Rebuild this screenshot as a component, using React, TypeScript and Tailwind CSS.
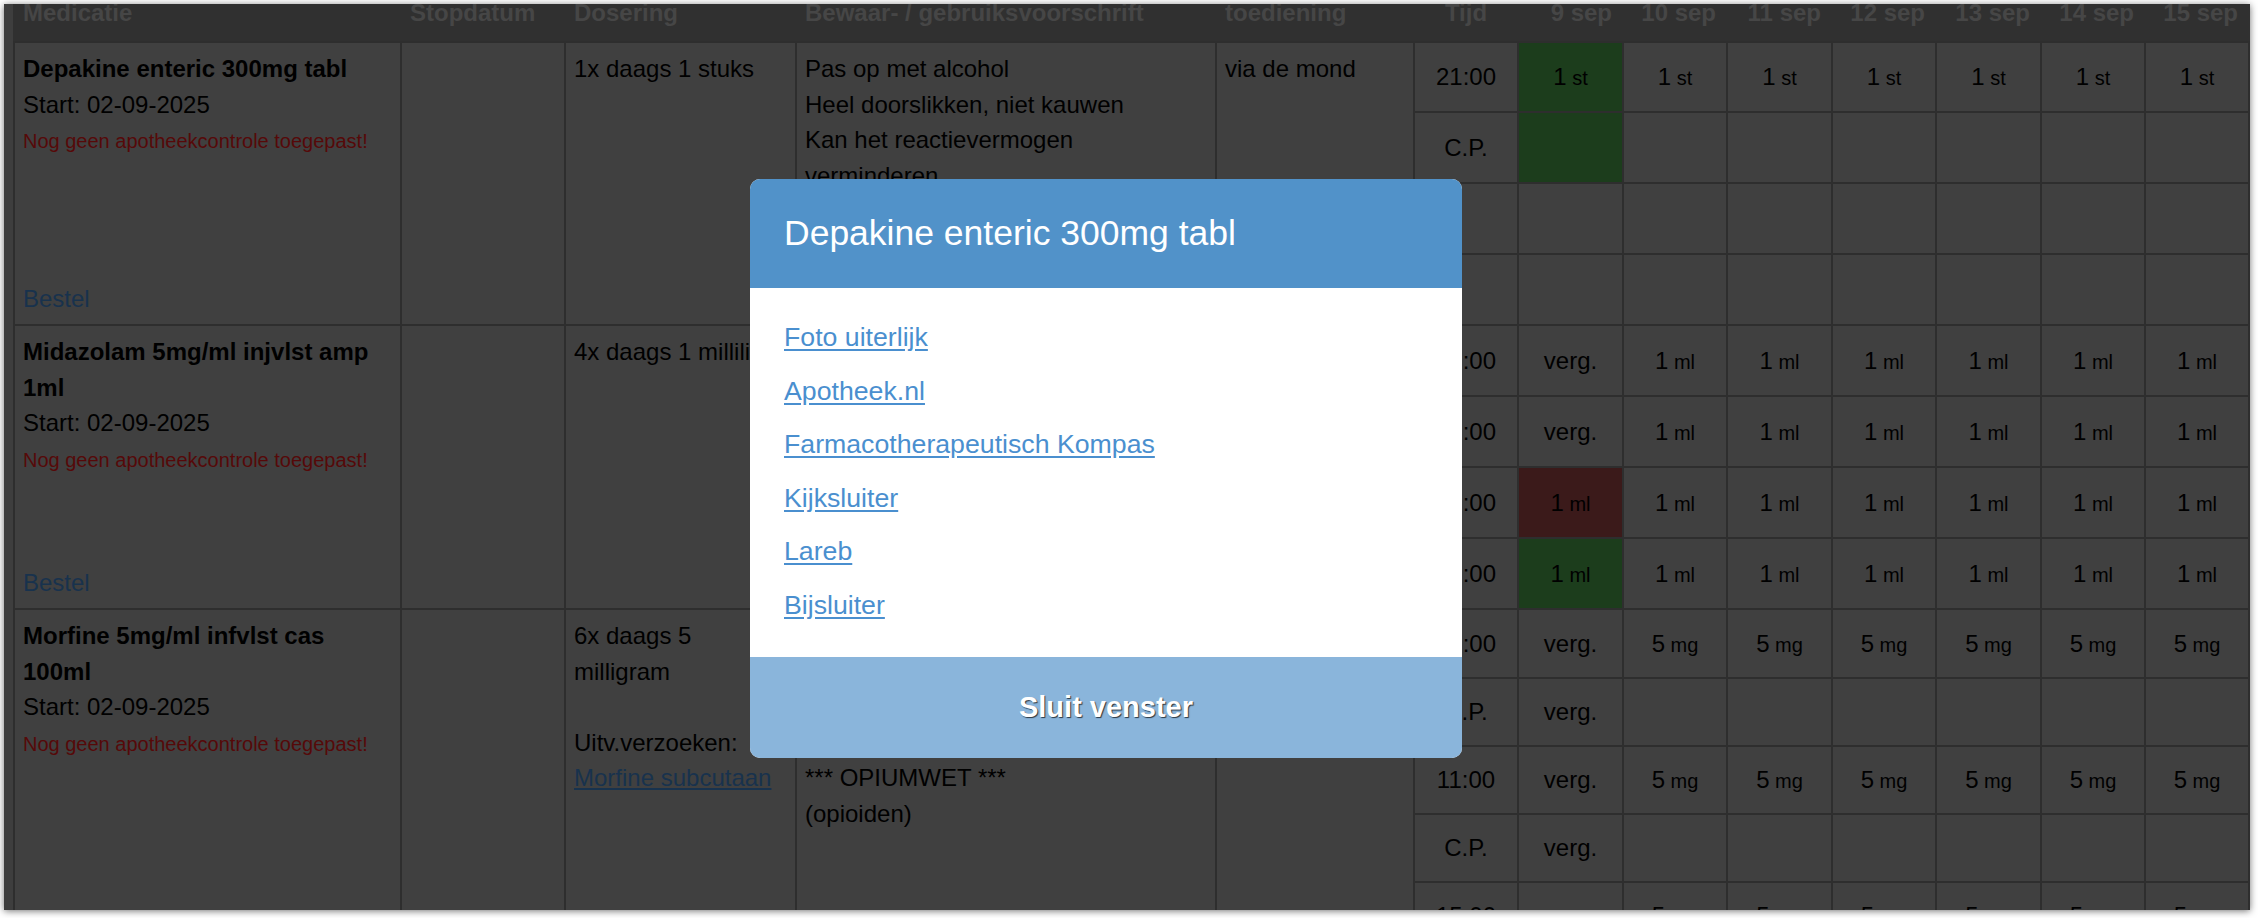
import React from "react";

type Day = { n?: string; u?: string; t?: string; c?: "g" | "r" };
type Sub = { time: string; days: Day[] };
type Med = {
  name: string;
  span: string;
  dos: React.ReactNode;
  bew: string[];
  toed: string;
  subs: Sub[];
  bestel: boolean;
};

const dayLabels = ["9 sep", "10 sep", "11 sep", "12 sep", "13 sep", "14 sep", "15 sep"];

const six = (d: Day): Day[] => [d, d, d, d, d, d];
const empty6: Day[] = [{}, {}, {}, {}, {}, {}];

const meds: Med[] = [
  {
    name: "Depakine enteric 300mg tabl",
    span: "row-span-4",
    dos: <div>1x daags 1 stuks</div>,
    bew: ["Pas op met alcohol", "Heel doorslikken, niet kauwen", "Kan het reactievermogen verminderen"],
    toed: "via de mond",
    bestel: true,
    subs: [
      { time: "21:00", days: [{ n: "1", u: "st", c: "g" }, ...six({ n: "1", u: "st" })] },
      { time: "C.P.", days: [{ c: "g" }, ...empty6] },
      { time: "", days: [{}, ...empty6] },
      { time: "", days: [{}, ...empty6] },
    ],
  },
  {
    name: "Midazolam 5mg/ml injvlst amp 1ml",
    span: "row-span-4",
    dos: <div>4x daags 1 milliliter</div>,
    bew: ["Kan het reactievermogen verminderen", "Pas op met alcohol"],
    toed: "subcutaan",
    bestel: true,
    subs: [
      { time: "07:00", days: [{ t: "verg." }, ...six({ n: "1", u: "ml" })] },
      { time: "12:00", days: [{ t: "verg." }, ...six({ n: "1", u: "ml" })] },
      { time: "17:00", days: [{ n: "1", u: "ml", c: "r" }, ...six({ n: "1", u: "ml" })] },
      { time: "22:00", days: [{ n: "1", u: "ml", c: "g" }, ...six({ n: "1", u: "ml" })] },
    ],
  },
  {
    name: "Morfine 5mg/ml infvlst cas 100ml",
    span: "row-span-6",
    dos: (
      <>
        <div>6x daags 5 milligram</div>
        <div>&nbsp;</div>
        <div>Uitv.verzoeken:</div>
        <div>
          <span className="underline text-[#18324d]">Morfine subcutaan</span>
        </div>
      </>
    ),
    bew: ["Pas op met alcohol", "Kan slaperig maken", "Kan het reactievermogen verminderen", "*** OPIUMWET ***", "(opioiden)"],
    toed: "subcutaan",
    bestel: true,
    subs: [
      { time: "07:00", days: [{ t: "verg." }, ...six({ n: "5", u: "mg" })] },
      { time: "C.P.", days: [{ t: "verg." }, ...empty6] },
      { time: "11:00", days: [{ t: "verg." }, ...six({ n: "5", u: "mg" })] },
      { time: "C.P.", days: [{ t: "verg." }, ...empty6] },
      { time: "15:00", days: [{ t: "verg." }, ...six({ n: "5", u: "mg" })] },
      { time: "C.P.", days: [{ t: "verg." }, ...empty6] },
    ],
  },
];

const cellBg = (c?: "g" | "r") =>
  c === "g" ? "bg-[#1c3d1c]" : c === "r" ? "bg-[#3b1a1a]" : "bg-[#404040]";

function DayCell({ d }: { d: Day }) {
  return (
    <div className={`${cellBg(d.c)} flex items-center justify-center text-[24px] text-black`}>
      {d.t ? (
        <span>{d.t}</span>
      ) : d.n ? (
        <span>
          {d.n}
          <span className="text-[20px]"> {d.u}</span>
        </span>
      ) : null}
    </div>
  );
}

export default function App() {
  return (
    <div
      className="w-[2258px] h-[918px] bg-white pt-[4px] pl-[4px] overflow-hidden"
      style={{ fontFamily: '"Liberation Sans", Arial, Helvetica, sans-serif' }}
    >
      <div className="relative w-[2246px] h-[906px] overflow-hidden bg-[#3e3e3e] pl-[9px] shadow-[0_1px_7px_rgba(0,0,0,0.55)]">
        <div className="w-[2237px]">
          {/* header */}
          <div className="grid grid-cols-[385px_162px_229px_418px_196px_102px_103px_102px_103px_102px_103px_102px_102px] gap-x-[2px] px-[2px] h-[37px] overflow-hidden bg-[#303030] font-bold text-[24px] leading-[24px] text-[#464646]">
            <div className="px-[8px] mt-[-3px]">Medicatie</div>
            <div className="px-[8px] mt-[-3px]">Stopdatum</div>
            <div className="px-[8px] mt-[-3px]">Dosering</div>
            <div className="px-[8px] mt-[-3px]">Bewaar- / gebruiksvoorschrift</div>
            <div className="px-[8px] mt-[-3px]">toediening</div>
            <div className="mt-[-3px] text-center">Tijd</div>
            {dayLabels.map((l) => (
              <div key={l} className="mt-[-3px] text-right pr-[10px] whitespace-nowrap">
                {l}
              </div>
            ))}
          </div>
          {/* body */}
          <div className="grid grid-cols-[385px_162px_229px_418px_196px_102px_103px_102px_103px_102px_103px_102px_102px] grid-rows-[68px_69px_69px_69px_69px_69px_69px_69px_67px_66px_66px_66px_66px_66px] gap-[2px] p-[2px] bg-[#2e2e2e] text-black">
            {meds.map((m) => (
              <React.Fragment key={m.name}>
                <div className={`${m.span} bg-[#404040] flex flex-col px-[8px] pt-[8px] pb-[8px]`}>
                  <div className="font-bold text-[24px] leading-[35.5px]">{m.name}</div>
                  <div className="text-[24px] leading-[35.5px]">Start: 02-09-2025</div>
                  <div className="text-[20px] leading-[39px] text-[#560909]">
                    Nog geen apotheekcontrole toegepast!
                  </div>
                  {m.bestel && (
                    <div className="mt-auto text-[24px] leading-[35.5px] text-[#18324d]">Bestel</div>
                  )}
                </div>
                <div className={`${m.span} bg-[#404040]`} />
                <div className={`${m.span} bg-[#404040] px-[8px] pt-[8px] text-[24px] leading-[35.5px]`}>
                  {m.dos}
                </div>
                <div className={`${m.span} bg-[#404040] px-[8px] pt-[8px] text-[24px] leading-[35.5px]`}>
                  {m.bew.map((b, i) => (
                    <div key={i}>{b}</div>
                  ))}
                </div>
                <div className={`${m.span} bg-[#404040] px-[8px] pt-[8px] text-[24px] leading-[35.5px]`}>
                  {m.toed}
                </div>
                {m.subs.map((s, si) => (
                  <React.Fragment key={si}>
                    <div className="bg-[#404040] flex items-center justify-center text-[24px]">{s.time}</div>
                    {s.days.map((d, di) => (
                      <DayCell key={di} d={d} />
                    ))}
                  </React.Fragment>
                ))}
              </React.Fragment>
            ))}
          </div>
        </div>

        {/* modal */}
        <div className="absolute left-[746px] top-[175px] w-[712px] rounded-[10px] overflow-hidden bg-white">
          <div className="h-[109px] bg-[#5192c9] flex items-center px-[34px] text-white text-[35.5px]">
            Depakine enteric 300mg tabl
          </div>
          <div className="h-[369px] pt-[23px] px-[34px] text-[26.7px] leading-[53.5px] text-[#4a8fcf]">
            {["Foto uiterlijk", "Apotheek.nl", "Farmacotherapeutisch Kompas", "Kijksluiter", "Lareb", "Bijsluiter"].map(
              (l) => (
                <div key={l}>
                  <span className="underline underline-offset-[3px]">{l}</span>
                </div>
              )
            )}
          </div>
          <div className="h-[101px] bg-[#8ab5db] flex items-center justify-center text-white font-bold text-[29px] [text-shadow:1px_1px_1px_rgba(0,0,0,0.7)]">
            Sluit venster
          </div>
        </div>
      </div>
    </div>
  );
}
